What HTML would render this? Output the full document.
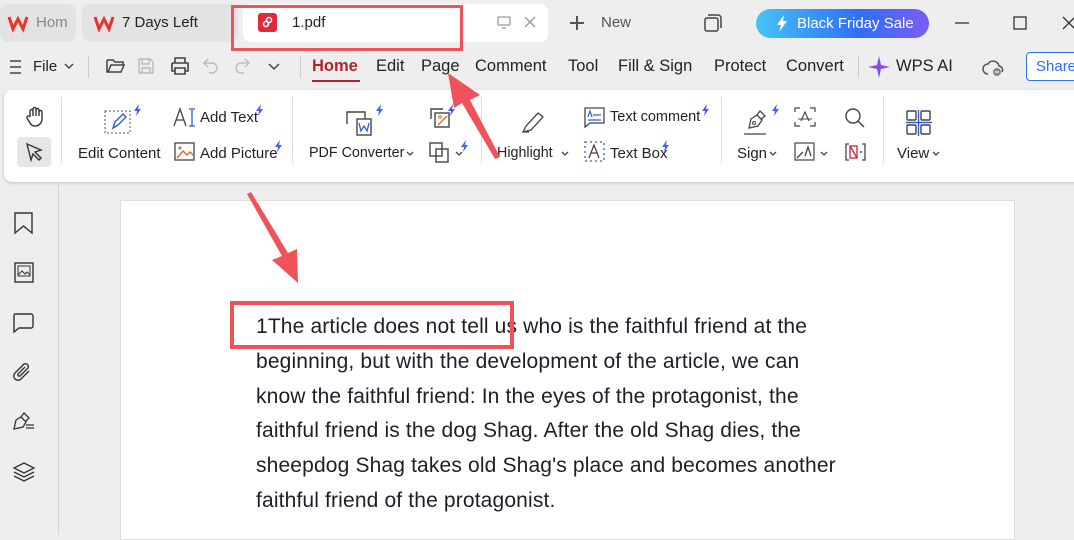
<!DOCTYPE html>
<html><head><meta charset="utf-8"><style>
*{margin:0;padding:0;box-sizing:border-box}
body{width:1074px;height:534px;overflow:hidden;background:#eeeeee;font-family:"Liberation Sans",sans-serif;color:#222;position:relative}
.abs{position:absolute}
.t{position:absolute;font-size:15px;color:#222;white-space:nowrap}
.menu{position:absolute;top:57px;font-size:16.5px;color:#222;white-space:nowrap}
.bolt{position:absolute;width:8px;height:12px}
svg{position:absolute;overflow:visible}
</style></head><body>
<!-- tab bar -->
<div class="abs" style="left:0;top:4px;width:76px;height:38px;background:#e3e3e3;border-radius:8px"></div>
<div class="abs" style="left:82px;top:4px;width:156px;height:38px;background:#e3e3e3;border-radius:8px"></div>
<div class="abs" style="left:243px;top:4px;width:305px;height:38px;background:#fff;border-radius:8px"></div>
<svg style="left:8px;top:15px" width="20" height="16" viewBox="0 0 20 16"><path d="M1 2 L5 14 L10 4 L15 14 L19 2" fill="none" stroke="#e8322a" stroke-width="3"/></svg>
<div class="t" style="left:36px;top:14px;color:#888">Hom</div>
<svg style="left:94px;top:15px" width="20" height="16" viewBox="0 0 20 16"><path d="M1 2 L5 14 L10 4 L15 14 L19 2" fill="none" stroke="#e8322a" stroke-width="3"/></svg>
<div class="t" style="left:122px;top:14px">7 Days Left</div>
<div class="abs" style="left:258px;top:13px;width:19px;height:19px;background:#e02a3c;border-radius:3px"></div>
<svg style="left:262px;top:16px" width="12" height="12"><circle cx="7" cy="4" r="2.5" fill="none" stroke="#fff" stroke-width="1.6"/><circle cx="4" cy="8" r="2.5" fill="none" stroke="#fff" stroke-width="1.6"/></svg>
<div class="t" style="left:292px;top:14px">1.pdf</div>
<svg style="left:497px;top:16px" width="14" height="13"><rect x="1" y="1" width="12" height="8" rx="1" fill="none" stroke="#999" stroke-width="1.3"/><path d="M5 12h4" stroke="#999" stroke-width="1.3"/></svg>
<svg style="left:524px;top:16px" width="12" height="12"><path d="M1 1L11 11M11 1L1 11" stroke="#999" stroke-width="1.4"/></svg>
<svg style="left:569px;top:15px" width="16" height="16"><path d="M8 1v14M1 8h14" stroke="#555" stroke-width="2"/></svg>
<div class="t" style="left:601px;top:14px;color:#555">New</div>
<svg style="left:704px;top:14px" width="18" height="18"><rect x="1" y="4" width="13" height="13" rx="2" fill="none" stroke="#444" stroke-width="1.5"/><path d="M4 1h10a3 3 0 0 1 3 3v10" fill="none" stroke="#444" stroke-width="1.5"/></svg>
<div class="abs" style="left:756px;top:9px;width:173px;height:29px;border-radius:15px;background:linear-gradient(90deg,#46c3f7,#2f6ff5 60%,#7b5cf5)"></div>
<svg style="left:776px;top:15px" width="12" height="17"><path d="M8 0L1 10h4l-2 7 8-11H7z" fill="#fff"/></svg>
<div class="t" style="left:797px;top:15px;color:#fff;font-size:15px">Black Friday Sale</div>
<svg style="left:955px;top:22px" width="16" height="2"><path d="M0 1h14" stroke="#333" stroke-width="1.3"/></svg>
<svg style="left:1013px;top:16px" width="14" height="14"><rect x="1" y="1" width="12" height="12" fill="none" stroke="#333" stroke-width="1.3"/></svg>
<svg style="left:1062px;top:16px" width="14" height="14"><path d="M1 1L13 13M13 1L1 13" stroke="#333" stroke-width="1.3"/></svg>
<!-- menu row -->
<svg style="left:10px;top:60px" width="12" height="14"><path d="M0 1h11M0 7h11M0 13h11" stroke="#444" stroke-width="1.4"/></svg>
<div class="menu" style="left:33px;top:58px;font-size:15px">File</div>
<svg style="left:64px;top:63px" width="10" height="6"><path d="M1 1l4 4 4-4" fill="none" stroke="#444" stroke-width="1.4"/></svg>
<div class="abs" style="left:88px;top:56px;width:1px;height:22px;background:#ccc"></div>
<svg style="left:106px;top:58px" width="20" height="16"><path d="M1 2h6l2 2h8v3M1 2v12h14l3-7H5l-3 7" fill="none" stroke="#444" stroke-width="1.5"/></svg>
<svg style="left:137px;top:57px" width="18" height="18"><path d="M2 2h11l3 3v11H2z M5 2v5h7V2M5 16v-5h8v5" fill="none" stroke="#bbb" stroke-width="1.4"/></svg>
<svg style="left:170px;top:57px" width="20" height="18"><path d="M5 6V1h10v5M2 6h16v8h-3M2 6v8h3M5 11h10v6H5z" fill="none" stroke="#444" stroke-width="1.6"/></svg>
<svg style="left:203px;top:58px" width="16" height="16"><path d="M5 1L1 5l4 4M1 5h8a5 5 0 0 1 0 10H6" fill="none" stroke="#bbb" stroke-width="1.4"/></svg>
<svg style="left:234px;top:58px" width="16" height="16"><path d="M11 1l4 4-4 4M15 5H7a5 5 0 0 0 0 10h3" fill="none" stroke="#bbb" stroke-width="1.4"/></svg>
<svg style="left:268px;top:63px" width="12" height="7"><path d="M1 1l5 5 5-5" fill="none" stroke="#444" stroke-width="1.5"/></svg>
<div class="abs" style="left:300px;top:56px;width:1px;height:22px;background:#ccc"></div>
<div class="menu" style="left:312px;font-weight:bold;color:#b3222f">Home</div>
<div class="abs" style="left:312px;top:80px;width:48px;height:2px;background:#b3222f"></div>
<div class="menu" style="left:376px">Edit</div>
<div class="menu" style="left:421px">Page</div>
<div class="menu" style="left:475px">Comment</div>
<div class="menu" style="left:568px">Tool</div>
<div class="menu" style="left:618px">Fill &amp; Sign</div>
<div class="menu" style="left:714px">Protect</div>
<div class="menu" style="left:786px">Convert</div>
<div class="abs" style="left:858px;top:56px;width:1px;height:22px;background:#ccc"></div>
<svg style="left:867px;top:55px" width="24" height="24"><path d="M12 1 L14 10 L23 12 L14 14 L12 23 L10 14 L1 12 L10 10Z" fill="#8a4cf0"/></svg>
<div class="menu" style="left:896px">WPS AI</div>
<svg style="left:982px;top:58px" width="22" height="18"><path d="M6 16a5 5 0 0 1 0-10 6 6 0 0 1 11 2 4 4 0 0 1 3 6" fill="none" stroke="#555" stroke-width="1.5"/><circle cx="15" cy="14" r="4" fill="#888"/><path d="M13 14h4" stroke="#fff" stroke-width="1.2"/></svg>
<div class="abs" style="left:1026px;top:52px;width:60px;height:29px;border:1px solid #2a6ff3;border-radius:4px;background:#fff"></div>
<div class="menu" style="left:1036px;top:58px;font-size:15px;color:#2a6ff3">Share</div>
<!-- toolbar panel -->
<div class="abs" style="left:4px;top:90px;width:1080px;height:92px;background:#fff;border-radius:8px;box-shadow:0 1px 3px rgba(0,0,0,.2)"></div>
<svg style="left:24px;top:106px" width="22" height="22"><path d="M6 11V5a1.5 1.5 0 0 1 3 0v5V3a1.5 1.5 0 0 1 3 0v7V4a1.5 1.5 0 0 1 3 0v6V6a1.5 1.5 0 0 1 3 0v7a7 7 0 0 1-7 7 6 6 0 0 1-5-3l-3-5a1.5 1.5 0 0 1 3-1z" fill="none" stroke="#333" stroke-width="1.4"/></svg>
<div class="abs" style="left:17px;top:137px;width:34px;height:30px;background:#e6e6e6;border-radius:4px"></div>
<svg style="left:25px;top:142px" width="20" height="20"><path d="M2 2l14 6-6 2 6 6-2 2-6-6-2 6z" fill="none" stroke="#333" stroke-width="1.4"/></svg>
<div class="abs" style="left:61px;top:97px;width:1px;height:66px;background:#ddd"></div>
<svg style="left:102px;top:108px" width="32" height="28"><rect x="3" y="3" width="25" height="22" fill="none" stroke="#555" stroke-width="1" stroke-dasharray="2 2"/><path d="M11 20l2-6 8-8 3 3-8 8z" fill="none" stroke="#2e5fd8" stroke-width="1.4"/></svg>
<svg class="bolt" style="left:133px;top:104px"><path d="M6 0L1 7h3l-1 5 5-7H5z" fill="#4a5cf5"/></svg>
<div class="t" style="left:78px;top:145px">Edit Content</div>
<svg style="left:173px;top:107px" width="24" height="22"><path d="M1 19L7 2l6 17M3 13h8" fill="none" stroke="#444" stroke-width="1.3"/><path d="M16 2h6M19 2v17M16 19h6" stroke="#2e5fd8" stroke-width="1.3"/></svg>
<div class="t" style="left:200px;top:109px">Add Text</div>
<svg class="bolt" style="left:255px;top:104px"><path d="M6 0L1 7h3l-1 5 5-7H5z" fill="#4a5cf5"/></svg>
<svg style="left:174px;top:142px" width="22" height="20"><rect x="1" y="1" width="19" height="17" fill="none" stroke="#444" stroke-width="1.3"/><path d="M3 16l6-7 4 4 3-3 4 4" fill="none" stroke="#d86a2a" stroke-width="1.4"/><circle cx="6" cy="6" r="1.5" fill="#d86a2a"/></svg>
<div class="t" style="left:200px;top:145px">Add Picture</div>
<svg class="bolt" style="left:274px;top:140px"><path d="M6 0L1 7h3l-1 5 5-7H5z" fill="#4a5cf5"/></svg>
<div class="abs" style="left:292px;top:97px;width:1px;height:66px;background:#ddd"></div>
<svg style="left:345px;top:110px" width="32" height="28"><path d="M2 14V2h18v7" fill="none" stroke="#444" stroke-width="1.4"/><rect x="12" y="9" width="14" height="16" fill="none" stroke="#444" stroke-width="1.4"/><path d="M14 13l2 8 3-5 3 5 2-8" fill="none" stroke="#2e5fd8" stroke-width="1.3"/></svg>
<svg class="bolt" style="left:375px;top:104px"><path d="M6 0L1 7h3l-1 5 5-7H5z" fill="#4a5cf5"/></svg>
<div class="t" style="left:309px;top:145px;font-size:14.3px">PDF Converter</div>
<svg style="left:406px;top:151px" width="8" height="5"><path d="M1 1l3 3 3-3" fill="none" stroke="#444" stroke-width="1.3"/></svg>
<svg style="left:429px;top:107px" width="24" height="22"><path d="M2 12V2h12" fill="none" stroke="#444" stroke-width="1.4"/><rect x="6" y="6" width="14" height="14" fill="none" stroke="#444" stroke-width="1.4"/><path d="M9 18l9-9" stroke="#d86a2a" stroke-width="1.3"/><circle cx="11" cy="10" r="1.3" fill="none" stroke="#d86a2a"/></svg>
<svg class="bolt" style="left:447px;top:104px"><path d="M6 0L1 7h3l-1 5 5-7H5z" fill="#4a5cf5"/></svg>
<svg style="left:429px;top:142px" width="22" height="22"><rect x="1" y="1" width="12" height="13" fill="none" stroke="#444" stroke-width="1.4"/><rect x="7" y="7" width="12" height="13" fill="none" stroke="#444" stroke-width="1.4"/></svg>
<svg style="left:455px;top:151px" width="8" height="5"><path d="M1 1l3 3 3-3" fill="none" stroke="#444" stroke-width="1.3"/></svg>
<svg class="bolt" style="left:460px;top:140px"><path d="M6 0L1 7h3l-1 5 5-7H5z" fill="#4a5cf5"/></svg>
<div class="abs" style="left:481px;top:97px;width:1px;height:66px;background:#ddd"></div>
<svg style="left:520px;top:110px" width="28" height="26"><path d="M3 22l3-6L18 3l5 4-12 13z M3 22h6" fill="none" stroke="#444" stroke-width="1.3"/></svg>
<div class="t" style="left:497px;top:145px;font-size:14.3px">Highlight</div>
<svg style="left:561px;top:151px" width="8" height="5"><path d="M1 1l3 3 3-3" fill="none" stroke="#444" stroke-width="1.3"/></svg>
<svg style="left:584px;top:107px" width="22" height="21"><path d="M1 1h19v15H6l-5 4z" fill="none" stroke="#444" stroke-width="1.3"/><path d="M4 10l2-6 2 6M9 8h8M4 13h13" fill="none" stroke="#2e5fd8" stroke-width="1.2"/></svg>
<div class="t" style="left:610px;top:109px;font-size:14.5px">Text comment</div>
<svg class="bolt" style="left:701px;top:104px"><path d="M6 0L1 7h3l-1 5 5-7H5z" fill="#4a5cf5"/></svg>
<svg style="left:584px;top:141px" width="22" height="22"><rect x="1" y="1" width="19" height="19" fill="none" stroke="#2e5fd8" stroke-width="1.3" stroke-dasharray="2 3"/><path d="M5 17l5-13 5 13M7 12h6" fill="none" stroke="#444" stroke-width="1.3"/></svg>
<div class="t" style="left:610px;top:145px">Text Box</div>
<svg class="bolt" style="left:661px;top:140px"><path d="M6 0L1 7h3l-1 5 5-7H5z" fill="#4a5cf5"/></svg>
<div class="abs" style="left:721px;top:97px;width:1px;height:66px;background:#ddd"></div>
<svg style="left:743px;top:108px" width="30" height="28"><path d="M6 20l2-9 6-4 5 5-4 6z M14 7l3-4 5 5-4 3M1 26h22" fill="none" stroke="#444" stroke-width="1.3"/><circle cx="11" cy="15" r="1.5" fill="none" stroke="#444"/></svg>
<svg class="bolt" style="left:771px;top:104px"><path d="M6 0L1 7h3l-1 5 5-7H5z" fill="#4a5cf5"/></svg>
<div class="t" style="left:737px;top:145px">Sign</div>
<svg style="left:769px;top:151px" width="8" height="5"><path d="M1 1l3 3 3-3" fill="none" stroke="#444" stroke-width="1.3"/></svg>
<svg style="left:794px;top:107px" width="22" height="20"><path d="M1 5V1h5M16 1h5v4M21 15v4h-5M6 19H1v-4" fill="none" stroke="#444" stroke-width="1.2"/><path d="M7 14l4-9 4 9M4 12h14" fill="none" stroke="#444" stroke-width="1.1"/></svg>
<svg style="left:794px;top:142px" width="22" height="20"><rect x="1" y="1" width="19" height="17" fill="none" stroke="#444" stroke-width="1.2"/><path d="M3 16l6-6M11 14l3-9 3 9" fill="none" stroke="#444" stroke-width="1.3"/></svg>
<svg style="left:820px;top:151px" width="8" height="5"><path d="M1 1l3 3 3-3" fill="none" stroke="#444" stroke-width="1.3"/></svg>
<svg style="left:844px;top:107px" width="22" height="22"><circle cx="9" cy="9" r="7" fill="none" stroke="#444" stroke-width="1.4"/><path d="M14 14l6 6" stroke="#444" stroke-width="1.5"/></svg>
<svg style="left:845px;top:143px" width="22" height="18"><path d="M4 1H1v16h3M17 1h3v16h-3" fill="none" stroke="#444" stroke-width="1.3"/><rect x="5" y="3" width="7" height="12" fill="none" stroke="#c8203a" stroke-width="1.3"/><path d="M5 3l7 12" stroke="#c8203a" stroke-width="1.3"/><circle cx="16" cy="9" r="1" fill="#444"/></svg>
<div class="abs" style="left:883px;top:97px;width:1px;height:66px;background:#ddd"></div>
<svg style="left:906px;top:110px" width="26" height="26"><rect x="1" y="1" width="9" height="9" rx="1" fill="none" stroke="#444" stroke-width="1.4"/><rect x="15" y="1" width="9" height="9" rx="1" fill="none" stroke="#444" stroke-width="1.4"/><rect x="1" y="15" width="9" height="9" rx="1" fill="none" stroke="#444" stroke-width="1.4"/><rect x="15" y="15" width="9" height="9" rx="1" fill="none" stroke="#444" stroke-width="1.4"/><path d="M0 12.5h26M12.5 0v26" stroke="#2e5fd8" stroke-width="1.4"/></svg>
<div class="t" style="left:897px;top:145px">View</div>
<svg style="left:932px;top:151px" width="8" height="5"><path d="M1 1l3 3 3-3" fill="none" stroke="#444" stroke-width="1.3"/></svg>
<!-- sidebar -->
<div class="abs" style="left:58px;top:184px;width:1px;height:350px;background:#d4d4d4"></div>
<svg style="left:14px;top:212px" width="20" height="22" viewBox="0 0 20 22"><path d="M1 1h17v20l-8.5-7L1 21z" fill="none" stroke="#333" stroke-width="1.4"/></svg>
<svg style="left:14px;top:262px" width="20" height="22"><rect x="1" y="1" width="18" height="19" fill="none" stroke="#333" stroke-width="1.4"/><rect x="4" y="4" width="12" height="10" fill="none" stroke="#333" stroke-width="1"/><path d="M4 13l4-4 3 3 2-2 3 3" fill="none" stroke="#333" stroke-width="1"/></svg>
<svg style="left:12px;top:313px" width="22" height="20"><path d="M3 1h16a2 2 0 0 1 2 2v10a2 2 0 0 1-2 2H7l-5 4V3a2 2 0 0 1 1-2z" fill="none" stroke="#333" stroke-width="1.4"/></svg>
<svg style="left:12px;top:361px" width="22" height="24"><path d="M17 10l-8 8a4 4 0 0 1-6-6l9-9a3 3 0 0 1 4 4l-8 8a1.5 1.5 0 0 1-2-2l7-7" fill="none" stroke="#333" stroke-width="1.4"/></svg>
<svg style="left:12px;top:412px" width="24" height="20"><path d="M2 17l2-9 5-3 5 5-3 5zM9 5l3-4 5 5-3 3M14 13h8M14 16h8" fill="none" stroke="#333" stroke-width="1.3"/></svg>
<svg style="left:13px;top:462px" width="22" height="22"><path d="M11 1L21 6 11 11 1 6z M1 10l10 5 10-5M1 14l10 5 10-5" fill="none" stroke="#333" stroke-width="1.3"/></svg>
<!-- page -->
<div class="abs" style="left:120px;top:200px;width:895px;height:340px;background:#fff;border:1px solid #ddd"></div>
<div class="abs" style="left:256px;top:310px;font-size:21px;line-height:34.8px;color:#1e1e2a;letter-spacing:0.15px;white-space:nowrap">1The article does not tell us who is the faithful friend at the<br>beginning, but with the development of the article, we can<br>know the faithful friend: In the eyes of the protagonist, the<br>faithful friend is the dog Shag. After the old Shag dies, the<br>sheepdog Shag takes old Shag's place and becomes another<br>faithful friend of the protagonist.</div>
<!-- annotations -->
<div class="abs" style="left:231px;top:5px;width:232px;height:46px;border:3px solid #f0525a"></div>
<div class="abs" style="left:230px;top:301px;width:284px;height:48px;border:4px solid #f0525a"></div>
<svg style="left:0;top:0" width="1074" height="534"><path d="M448 73 L480 95 L470 100 L500 157 L495 159 L462 103 L454 108Z" fill="#f0525a"/><path d="M298 283 L272 260 L282 256 L247 194 L251 192 L288 253 L297 249Z" fill="#f0525a"/></svg>
</body></html>
